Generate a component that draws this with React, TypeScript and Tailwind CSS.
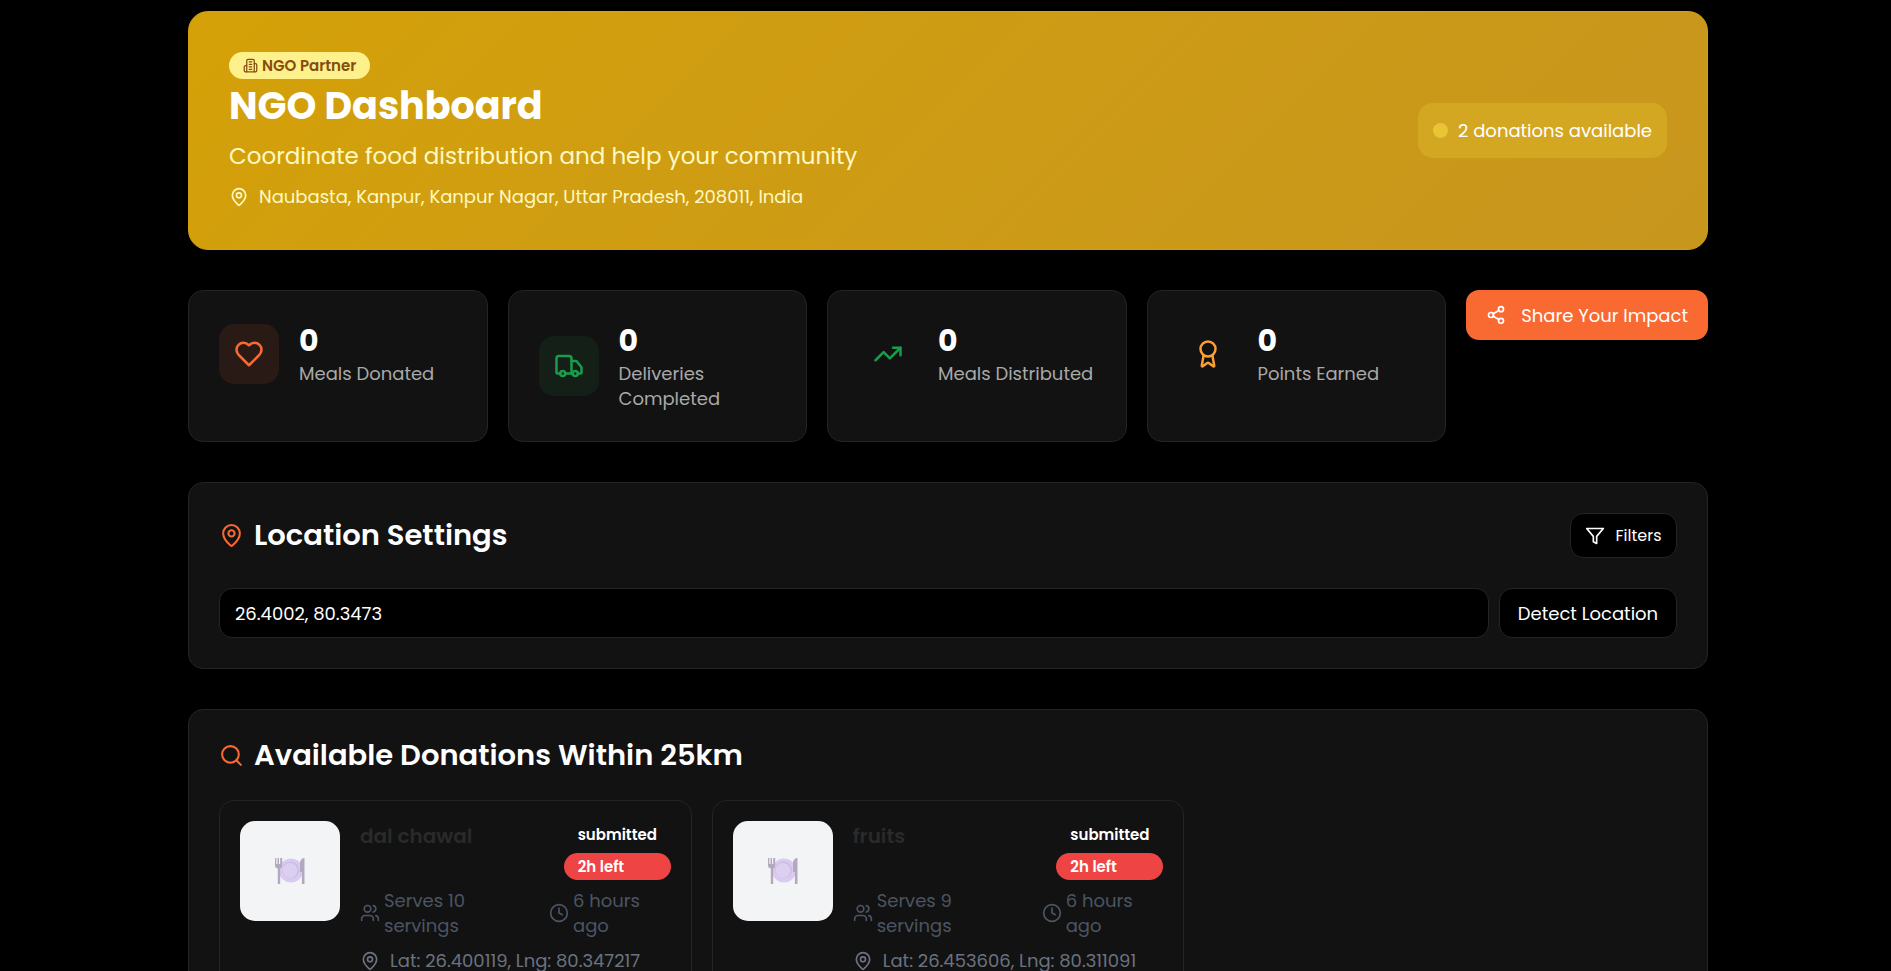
import React from "react";
import { Award, Clock, MapPin, Search, Share2, TrendingUp, Truck, Users } from "lucide-react";

type IconProps = { size?: number; className?: string };
type Stat = { label: string; value: number; icon: React.ComponentType<IconProps>; tile: string };

function StrokeIcon({ size = 24, className, children }: IconProps & { children: React.ReactNode }) {
  return (
    <svg
      width={size}
      height={size}
      viewBox="0 0 24 24"
      fill="none"
      stroke="currentColor"
      strokeWidth="2"
      strokeLinecap="round"
      strokeLinejoin="round"
      className={className}
      aria-hidden="true"
    >
      {children}
    </svg>
  );
}

function HeartIcon(props: IconProps) {
  return (
    <StrokeIcon {...props}>
      <path d="M19 14c1.490-1.460 3-3.210 3-5.500A5.500 5.500 0 0 0 16.500 3c-1.760 0-3 .5-4.500 2-1.500-1.500-2.740-2-4.500-2A5.500 5.500 0 0 0 2 8.500c0 2.300 1.500 4.050 3 5.500l7 7Z" />
    </StrokeIcon>
  );
}

function BuildingIcon(props: IconProps) {
  return (
    <StrokeIcon {...props}>
      <path d="M6 22V4a2 2 0 0 1 2-2h8a2 2 0 0 1 2 2v18Z" />
      <path d="M6 12H4a2 2 0 0 0-2 2v6a2 2 0 0 0 2 2h2" />
      <path d="M18 9h2a2 2 0 0 1 2 2v9a2 2 0 0 1-2 2h-2" />
      <path d="M10 6h4M10 10h4M10 14h4M10 18h4" />
    </StrokeIcon>
  );
}

function FilterIcon(props: IconProps) {
  return (
    <StrokeIcon {...props}>
      <polygon points="22 3 2 3 10 12.46 10 19 14 21 14 12.46 22 3" />
    </StrokeIcon>
  );
}

function PlateIcon() {
  return (
    <svg width="32" height="32" viewBox="0 0 32 32" aria-hidden="true">
      <circle cx="17" cy="15.500" r="12" fill="#d9cbf0" />
      <circle cx="16.500" cy="15" r="8.500" fill="#cdbbe8" />
      <circle cx="16" cy="15.500" r="7.500" fill="#dcd0f1" />
      <path d="M1 3h1.300v6h1.200V3h1.500v6h1.200V3h2v7.500c0 1.500-1 2.500-2 3V29H3.800V13.500C2 13 1 12 1 10.500Z" fill="#b3a9bf" />
      <path d="M30.500 3v26h-2.600V17H26V8c0-3 2-5 4.500-5Z" fill="#b3a9bf" />
    </svg>
  );
}

const stats: Stat[] = [
  { label: "Meals Donated", value: 0, icon: HeartIcon, tile: "bg-[#291a15] text-[#f96932]" },
  { label: "Deliveries Completed", value: 0, icon: Truck, tile: "bg-[#131f17] text-[#1a9c4b]" },
  { label: "Meals Distributed", value: 0, icon: TrendingUp, tile: "text-[#1a9c4b]" },
  { label: "Points Earned", value: 0, icon: Award, tile: "text-[#fb9e37]" },
];

const donations = [
  { title: "dal chawal", serves: 10, posted: "6 hours ago", left: "2h left", lat: "26.400119", lng: "80.347217" },
  { title: "fruits", serves: 9, posted: "6 hours ago", left: "2h left", lat: "26.453606", lng: "80.311091" },
];

function StatCard({ label, value, icon: Icon, tile }: Stat) {
  return (
    <article className="min-w-0 flex-1 rounded-[15px] border border-[#242424] bg-[#121212] p-[30px]">
      <div className="flex items-center gap-5">
        <div className={`flex size-[60px] shrink-0 items-center justify-center rounded-[15px] ${tile}`}>
          <Icon size={30} />
        </div>
        <div className="min-w-0">
          <p className="text-[30px] leading-10 font-bold">{value}</p>
          <p className="text-[18px] leading-[25px] text-[#a9a9a9]">{label}</p>
        </div>
      </div>
    </article>
  );
}

function DonationCard({ item }: { item: (typeof donations)[number] }) {
  return (
    <article className="flex gap-5 rounded-[15px] border border-[#242424] p-5">
      <div className="flex size-[100px] shrink-0 items-center justify-center rounded-[15px] bg-[#f3f4f6]">
        <PlateIcon />
      </div>
      <div className="min-w-0 flex-1 text-[18px] leading-[25px]">
        <div className="flex items-start justify-between">
          <h3 className="text-[20px] leading-[30px] font-semibold text-[#2a2a2a]">{item.title}</h3>
          <div className="flex w-[107px] flex-col gap-[5px] text-[15px] leading-[27px] font-semibold">
            <span className="rounded-full px-3.5">submitted</span>
            <span className="rounded-full bg-[#ef4444] px-3.5">{item.left}</span>
          </div>
        </div>
        <div className="mt-2 flex text-[#4b5563]">
          <div className="flex w-[189px] items-center gap-1">
            <Users size={20} className="shrink-0" />
            <span className="w-[100px]">Serves {item.serves} servings</span>
          </div>
          <div className="flex items-center gap-1">
            <Clock size={20} className="shrink-0" />
            <span className="w-[75px]">{item.posted}</span>
          </div>
        </div>
        <p className="mt-2.5 flex items-center gap-2.5 text-[#6b7280]">
          <MapPin size={20} className="shrink-0" />
          Lat: {item.lat}, Lng: {item.lng}
        </p>
      </div>
    </article>
  );
}

export default function App() {
  return (
    <div className="min-h-screen bg-black pt-[11px] pl-[5px] font-[Poppins,Inter,sans-serif] text-white">
      <main className="mx-auto flex max-w-[1520px] flex-col gap-10">
        <header className="flex items-center justify-between rounded-[20px] border border-[#d4a010] bg-linear-135 from-[#d4a107] to-[#c7961d] p-10">
          <div>
            <span className="flex w-fit items-center gap-1 rounded-full bg-[#fef08a] px-3.5 text-[15px] leading-[27px] font-semibold text-[#854d0e]">
              <BuildingIcon size={15} />
              NGO Partner
            </span>
            <h1 className="mt-0.5 mb-2 text-[38px] leading-[50px] font-bold">NGO Dashboard</h1>
            <p className="mb-2.5 text-[23px] leading-[35px] text-[#fef9c3]">Coordinate food distribution and help your community</p>
            <p className="flex items-center gap-2.5 text-[18px] leading-[25px] text-[#fef9c3]">
              <MapPin size={20} />
              Naubasta, Kanpur, Kanpur Nagar, Uttar Pradesh, 208011, India
            </p>
          </div>
          <div className="flex items-center gap-2.5 rounded-[15px] bg-[#d4a723] p-[15px] text-[18px] leading-[25px]">
            <span className="size-[15px] rounded-full bg-[#e9c535]" />
            2 donations available
          </div>
        </header>

        <section className="flex items-stretch gap-5">
          {stats.map((s) => (
            <StatCard key={s.label} {...s} />
          ))}
          <button className="flex h-[50px] w-[242px] items-center justify-between self-start rounded-[13px] bg-[#f96932] px-5 text-[18px]">
            <Share2 size={20} />
            Share Your Impact
          </button>
        </section>

        <section className="rounded-[15px] border border-[#242424] bg-[#121212] p-[30px]">
          <div className="mb-[30px] flex items-center justify-between">
            <h2 className="flex items-center gap-2.5 text-[29px] leading-[45px] font-semibold">
              <MapPin size={25} className="text-[#f96932]" />
              Location Settings
            </h2>
            <button className="flex h-[45px] w-[107px] items-center justify-center gap-2.5 rounded-[13px] border border-[#242424] bg-black text-[16px]">
              <FilterIcon size={20} />
              Filters
            </button>
          </div>
          <div className="flex gap-2.5">
            <input
              aria-label="Location"
              defaultValue="26.4002, 80.3473"
              className="h-[50px] min-w-0 flex-1 rounded-[13px] border border-[#242424] bg-black px-[15px] text-[18px]"
            />
            <button className="h-[50px] w-[178px] rounded-[13px] border border-[#242424] bg-black text-[18px]">
              Detect Location
            </button>
          </div>
        </section>

        <section className="rounded-[15px] border border-[#242424] bg-[#121212] p-[30px]">
          <h2 className="mb-[30px] flex items-center gap-2.5 text-[29px] leading-[30px] font-semibold">
            <Search size={25} className="text-[#f96932]" />
            Available Donations Within 25km
          </h2>
          <div className="grid grid-cols-3 gap-5">
            {donations.map((d) => (
              <DonationCard key={d.title} item={d} />
            ))}
          </div>
        </section>
      </main>
    </div>
  );
}
